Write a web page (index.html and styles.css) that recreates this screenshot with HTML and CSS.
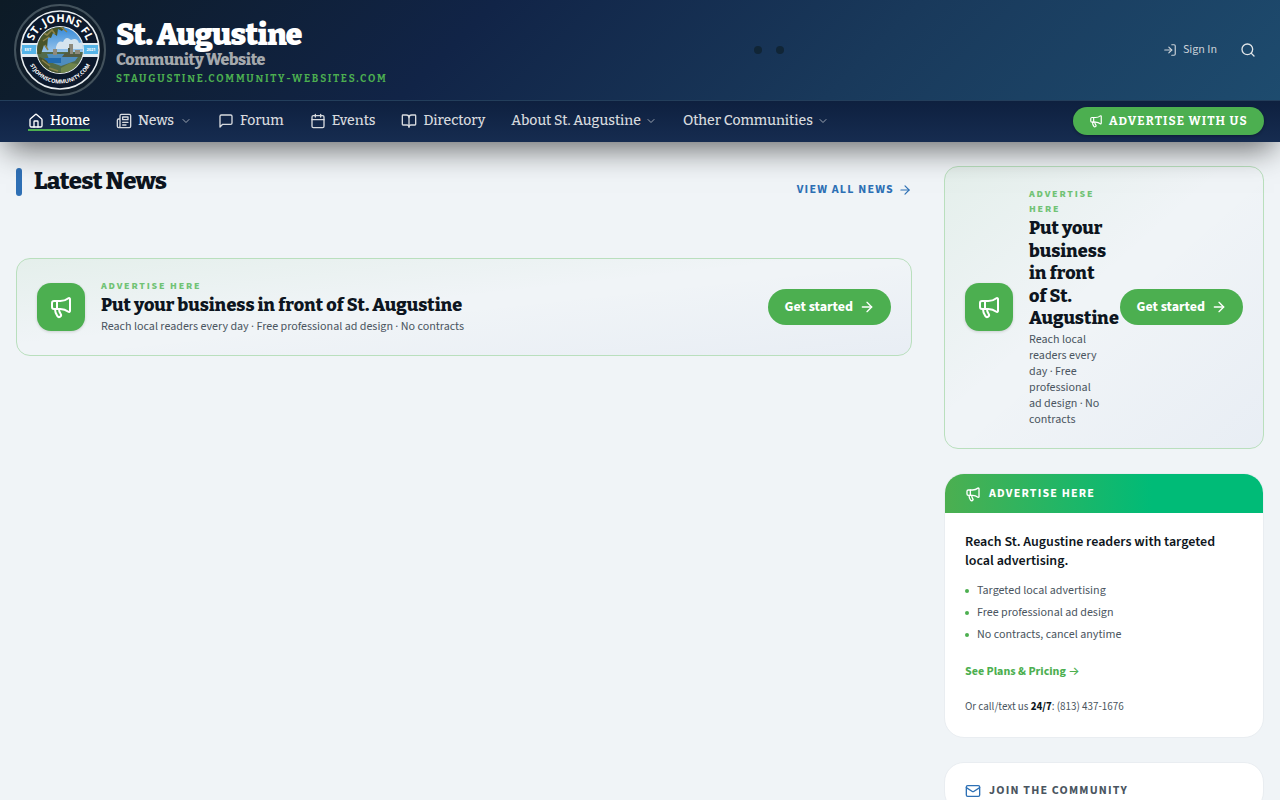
FILE: index.html
```html
<!DOCTYPE html>
<html lang="en">
<head>
<meta charset="utf-8">
<meta name="viewport" content="width=device-width, initial-scale=1">
<title>St. Augustine Community Website</title>
<link rel="stylesheet" href="styles.css">
</head>
<body>
<svg class="sprite" aria-hidden="true">
  <symbol id="megaphone" viewBox="0 0 24 24"><path d="M11 6a13 13 0 0 0 8.4-2.8A1 1 0 0 1 21 4v12a1 1 0 0 1-1.6.8A13 13 0 0 0 11 14H5a2 2 0 0 1-2-2V8a2 2 0 0 1 2-2z"/><path d="M6 14a12 12 0 0 0 2.4 7.2 2 2 0 0 0 3.2-2.4A8 8 0 0 1 10 14"/><path d="M8 6v8"/></symbol>
  <symbol id="arrow" viewBox="0 0 24 24"><path d="M5 12h14"/><path d="m12 5 7 7-7 7"/></symbol>
  <symbol id="chevron" viewBox="0 0 24 24"><path d="m6 9 6 6 6-6"/></symbol>
</svg>
<header class="site-header">
  <div class="masthead">
    <a class="brand" href="#">
      <svg class="seal" viewBox="0 0 92 92" role="img" aria-label="St. Johns FL community seal">
        <defs>
          <clipPath id="scene"><circle cx="46" cy="46" r="23"/></clipPath>
          <linearGradient id="sky" x1="0" y1="0" x2="0" y2="1"><stop offset="0" stop-color="#2f86d8"/><stop offset="1" stop-color="#a9cfee"/></linearGradient>
          <path id="arc-top" d="M18 46a28 28 0 0 1 56 0"/>
          <path id="arc-bottom" d="M12.500 46a33.500 33.500 0 0 0 67 0"/>
        </defs>
        <circle cx="46" cy="46" r="45" fill="#101d2a" stroke="#43525c" stroke-width="2"/>
        <circle cx="46" cy="46" r="39" fill="#0c192c" stroke="#e8edf0" stroke-width="1.600"/>
        <path d="M8 39h76v14H8z" fill="#e3edf3"/>
        <path d="M8 41h76v9H8z" fill="#55b4e8"/>
        <circle cx="46" cy="46" r="24" fill="#e8edf0"/>
        <g clip-path="url(#scene)">
          <path d="M22 22h48v30H22z" fill="url(#sky)"/>
          <path d="M42 43q2-7 7-5 3-7 8-2 6-3 8 3l6-2v8H42z" fill="#d5e4ee"/>
          <path d="M22 48h48v22H22z" fill="#526b4a"/>
          <path d="M33 50h33l-5 7-14 5-11-4z" fill="#4e8dbf"/>
          <path d="M30 54h17v5H34z" fill="#226bb0"/>
          <path d="M39 45h4v6h-4zM55 40h4v10h-4zM61 46h5v5h-5z" fill="#8e8a7c"/>
          <path d="M51 49h3v-5h2v6h12v3H48z" fill="#525b43"/>
          <path d="M22 21h30l-4 6-4-2-1 7-4-3-2 5-3-1-1 12-3-4-3 9h-7z" fill="#485428"/>
          <path d="m26 53 7 4 4 9 12 3-4 3H26l-5-14z" fill="#49522a"/>
          <path d="m47 64 9-5 8 1-5 9-12 3z" fill="#70854c"/>
          <path d="M28 28l5 3 5-5 3 4M29 37l6-4M31 41l3 5M28 56l8 6M46 22l7 6M35 64l9 3" stroke="#8b8149" stroke-width="1.500" fill="none"/>
        </g>
        <text class="seal-name"><textPath href="#arc-top" startOffset="50%" text-anchor="middle">ST. JOHNS FL</textPath></text>
        <text class="seal-site"><textPath href="#arc-bottom" startOffset="50%" text-anchor="middle">STJOHNSCOMMUNITY.COM</textPath></text>
        <text class="seal-date" x="14" y="47">EST</text><text class="seal-date" x="77" y="47">2021</text>
      </svg>
      <span class="brand-text"><strong class="brand-name">St. Augustine</strong><span class="brand-sub">Community Website</span><span class="brand-url">STAUGUSTINE.COMMUNITY-WEBSITES.COM</span></span>
    </a>
    <div class="dots" aria-hidden="true"><span></span><span></span></div>
    <div class="account">
      <a class="sign-in" href="#"><svg class="icon small" viewBox="0 0 24 24"><path d="M15 3h4a2 2 0 0 1 2 2v14a2 2 0 0 1-2 2h-4"/><path d="m10 17 5-5-5-5"/><path d="M15 12H3"/></svg>Sign In</a>
      <button class="search" type="button" aria-label="Search"><svg class="icon" viewBox="0 0 24 24"><circle cx="11" cy="11" r="8"/><path d="m21 21-4.300-4.300"/></svg></button>
    </div>
  </div>
  <nav class="nav" aria-label="Main">
    <div class="nav-links">
      <a class="active" href="#"><svg class="icon" viewBox="0 0 24 24"><path d="M15 21v-8a1 1 0 0 0-1-1h-4a1 1 0 0 0-1 1v8"/><path d="M3 10a2 2 0 0 1 .7-1.500l7-6a2 2 0 0 1 2.600 0l7 6A2 2 0 0 1 21 10v9a2 2 0 0 1-2 2H5a2 2 0 0 1-2-2z"/></svg>Home</a>
      <a href="#"><svg class="icon" viewBox="0 0 24 24"><path d="M4 22h16a2 2 0 0 0 2-2V4a2 2 0 0 0-2-2H8a2 2 0 0 0-2 2v16a2 2 0 0 1-4 0v-9c0-1.100.9-2 2-2h2"/><path d="M18 14h-8M15 18h-5M10 6h8v4h-8z"/></svg>News<svg class="icon chevron"><use href="#chevron"/></svg></a>
      <a href="#"><svg class="icon" viewBox="0 0 24 24"><path d="M21 15a2 2 0 0 1-2 2H7l-4 4V5a2 2 0 0 1 2-2h14a2 2 0 0 1 2 2z"/></svg>Forum</a>
      <a href="#"><svg class="icon" viewBox="0 0 24 24"><path d="M8 2v4M16 2v4M3 10h18"/><rect x="3" y="4" width="18" height="18" rx="2"/></svg>Events</a>
      <a href="#"><svg class="icon" viewBox="0 0 24 24"><path d="M12 7v14"/><path d="M3 18a1 1 0 0 1-1-1V4a1 1 0 0 1 1-1h5a4 4 0 0 1 4 4 4 4 0 0 1 4-4h5a1 1 0 0 1 1 1v13a1 1 0 0 1-1 1h-6a3 3 0 0 0-3 3 3 3 0 0 0-3-3z"/></svg>Directory</a>
      <a class="plain" href="#">About St. Augustine<svg class="icon chevron"><use href="#chevron"/></svg></a>
      <a class="plain" href="#">Other Communities<svg class="icon chevron"><use href="#chevron"/></svg></a>
    </div>
    <a class="nav-cta" href="#"><svg class="icon small"><use href="#megaphone"/></svg>ADVERTISE WITH US</a>
  </nav>
</header>
<div class="page">
  <main>
    <div class="section-head"><h1>Latest News</h1><a href="#">VIEW ALL NEWS<svg class="icon small"><use href="#arrow"/></svg></a></div>
    <section class="promo">
      <span class="promo-icon"><svg class="icon large"><use href="#megaphone"/></svg></span>
      <div class="promo-copy"><p class="eyebrow">ADVERTISE HERE</p><h2>Put your business in front of St. Augustine</h2><p class="detail">Reach local readers every day · Free professional ad design · No contracts</p></div>
      <a class="promo-btn" href="#">Get started<svg class="icon"><use href="#arrow"/></svg></a>
    </section>
  </main>
  <aside>
    <section class="promo">
      <span class="promo-icon"><svg class="icon large"><use href="#megaphone"/></svg></span>
      <div class="promo-copy"><p class="eyebrow">ADVERTISE HERE</p><h2>Put your business in front of St. Augustine</h2><p class="detail">Reach local readers every day · Free professional ad design · No contracts</p></div>
      <a class="promo-btn" href="#">Get started<svg class="icon"><use href="#arrow"/></svg></a>
    </section>
    <section class="card">
      <h2 class="card-head green"><svg class="icon"><use href="#megaphone"/></svg>ADVERTISE HERE</h2>
      <div class="card-body">
        <h3>Reach St. Augustine readers with targeted local advertising.</h3>
        <ul><li>Targeted local advertising</li><li>Free professional ad design</li><li>No contracts, cancel anytime</li></ul>
        <a class="plans" href="#">See Plans &amp; Pricing <span>→</span></a>
        <p class="call">Or call/text us <strong>24/7</strong>: (813) 437-1676</p>
      </div>
    </section>
    <section class="card">
      <h2 class="card-head join"><svg class="icon" viewBox="0 0 24 24"><rect x="2" y="4" width="20" height="16" rx="2"/><path d="m22 7-8.970 5.700a1.940 1.940 0 0 1-2.060 0L2 7"/></svg>JOIN THE COMMUNITY</h2>
    </section>
  </aside>
</div>
</body>
</html>
```
FILE: styles.css
```css
:root {
  --sans: "Source Sans 3", "Source Sans Pro", "Noto Sans CJK SC", sans-serif;
  --serif: "Bitter", "DejaVu Serif Condensed", "DejaVu Serif", serif;
  --green: #4caf50;
  --blue: #2d70b5;
  --ink: #0d1520;
}
* { box-sizing: border-box; }
body { margin: 0; background: #f0f4f7; color: var(--ink); font: 12px/16px var(--sans); }
h1, h2, h3, p, ul { margin: 0; padding: 0; }
a { color: inherit; text-decoration: none; }
.sprite { display: none; }
.icon { width: 16px; height: 16px; flex: none; fill: none; stroke: currentColor; stroke-width: 2; stroke-linecap: round; stroke-linejoin: round; }
.icon.small { width: 14px; height: 14px; }
.icon.large { width: 24px; height: 24px; }
.icon.chevron { width: 12px; height: 12px; opacity: .7; }

.site-header { position: relative; box-shadow: 0 12px 30px -6px rgba(0, 0, 0, .6); background: linear-gradient(135deg, #0d1b26 0%, #112447 35%, #19395b 65%, #1e4d70 100%); }
.masthead { display: flex; align-items: center; height: 100px; padding: 0 22px 0 14px; }
.brand { display: flex; align-items: center; gap: 10px; }
.seal { width: 92px; height: 92px; }
.seal text { fill: #fff; font-family: "Open Sans", sans-serif; font-weight: 700; }
.seal .seal-name { font-size: 11px; }
.seal .seal-site { font-size: 5.5px; }
.seal .seal-date { font-size: 4px; text-anchor: middle; }
.brand-text { display: flex; flex-direction: column; padding-top: 8px; font-family: var(--serif); }
.brand-name { color: #fff; font-size: 30px; font-weight: 900; letter-spacing: -.025em; line-height: 30px; }
.brand-sub { color: #a5a9ad; font-size: 16px; font-weight: 800; letter-spacing: -.025em; line-height: 20px; }
.brand-url { color: var(--green); font-size: 10px; font-weight: 700; letter-spacing: .18em; line-height: 18px; }
.dots { display: flex; flex: 1; justify-content: center; gap: 14px; }
.dots span { width: 8px; height: 8px; border-radius: 50%; background: #102536; }
.account { display: flex; align-items: center; gap: 21px; padding-left: 12px; color: #cbd2d8; }
.sign-in { display: flex; align-items: center; gap: 6px; }
.search { display: flex; padding: 2px; border: 0; background: none; color: #e1e5e8; }
.nav { display: flex; align-items: center; justify-content: space-between; height: 42px; padding: 0 16px 1px 28px; border-top: 1px solid #233e5b; background: linear-gradient(#0e203f, #162c50); }
.nav-links { display: flex; gap: 26px; color: #d7dade; font: 500 14px/20px var(--serif); }
.nav-links a { display: flex; align-items: center; gap: 6px; white-space: nowrap; }
.nav-links .plain { gap: 4px; }
.nav-links .active { color: #fff; box-shadow: inset 0 -2px var(--green); }
.nav-cta { display: flex; align-items: center; gap: 6px; padding: 4px 16px; border-radius: 14px; background: var(--green); color: #fff; font: 700 12px/20px var(--serif); letter-spacing: .1em; box-shadow: 0 1px 3px rgba(0, 0, 0, .3); white-space: nowrap; }

.page { display: grid; grid-template-columns: minmax(0, 1fr) 320px; gap: 32px; align-items: start; padding: 24px 16px; }
.section-head { display: flex; min-height: 30px; justify-content: space-between; margin-bottom: 60px; }
.section-head h1 { display: flex; align-items: center; gap: 12px; font: 800 24px/26px var(--serif); letter-spacing: -.025em; height: 28px; padding-bottom: 2px; }
.section-head h1::before { width: 6px; height: 28px; margin-bottom: -2px; border-radius: 3px; background: #2f70b5; content: ""; }
.section-head a { display: flex; align-items: center; align-self: flex-end; gap: 4px; color: var(--blue); font-weight: 700; letter-spacing: .1em; }
main { padding-top: 2px; }
aside { display: flex; flex-direction: column; gap: 24px; }
.promo { display: flex; align-items: center; gap: 16px; padding: 20px; border: 1px solid #b9dfbd; border-radius: 14px; background: linear-gradient(to bottom right, rgba(76, 175, 80, .07), rgba(76, 175, 80, 0) 45%, rgba(43, 80, 176, 0) 50%, rgba(43, 80, 176, .04)); }
.promo-icon { display: grid; flex: none; width: 48px; height: 48px; place-items: center; border-radius: 14px; background: var(--green); color: #fff; box-shadow: 0 1px 3px rgba(0, 0, 0, .15); }
.promo-copy { flex: 1; min-width: 0; }
.promo .eyebrow { color: #71c375; font-size: 10px; font-weight: 800; letter-spacing: .18em; line-height: 15px; }
.promo h2 { font: 800 18px/1.25 var(--serif); }
.detail { padding-top: 2px; color: #4a5560; }
.promo-btn { display: flex; flex: none; align-items: center; gap: 6px; padding: 8px 16px; border-radius: 18px; background: var(--green); color: #fff; font-size: 14px; font-weight: 700; line-height: 20px; }
.card { overflow: hidden; border: 1px solid #e9edf1; border-radius: 20px; background: #fff; }
.card-head { display: flex; align-items: center; gap: 8px; padding: 10px 20px; font-size: 12px; font-weight: 700; letter-spacing: .1em; line-height: 20px; }
.card-head.green { padding-bottom: 9px; background: linear-gradient(90deg, var(--green), #00bb77 65%); color: #fff; }
.card-head.join { padding-top: 18px; color: #4a5560; }
.card-head.join .icon { color: var(--blue); }
.card-body { padding: 20px 20px 22px; color: #4a5560; }
.card-body h3 { margin-bottom: 9px; color: var(--ink); font-size: 14px; font-weight: 600; line-height: 19px; }
.card-body ul { list-style: none; }
.card-body li { display: flex; align-items: center; gap: 8px; line-height: 22px; }
.card-body li::before { width: 4px; height: 4px; border-radius: 50%; background: var(--green); content: ""; }
.plans { display: block; margin: 17px 0 19px; color: var(--green); font-weight: 700; }
.plans span { font-family: "Inter", sans-serif; font-weight: 500; }
.call { font-size: 11px; }
.call strong { color: var(--ink); }
```
